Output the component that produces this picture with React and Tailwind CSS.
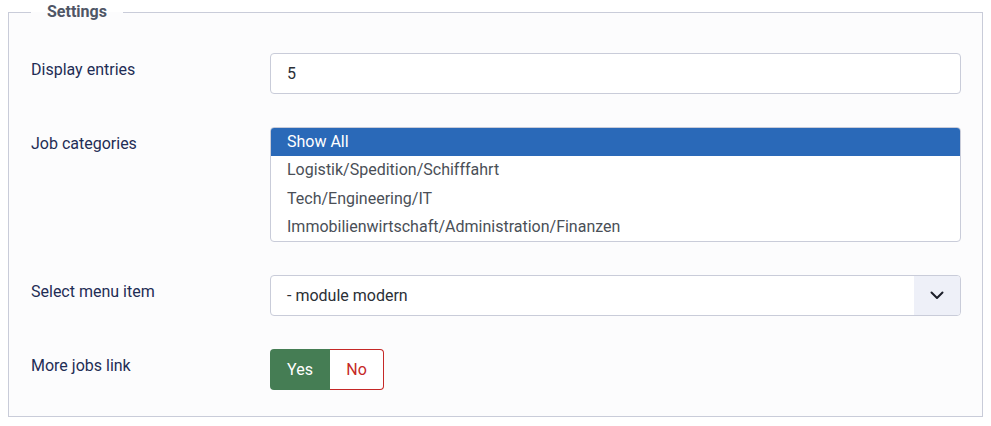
function Label({ children }) {
  return <div className="pt-[5px] text-base leading-6 text-[#1f2d55]">{children}</div>;
}

const categories = [
  "Show All",
  "Logistik/Spedition/Schifffahrt",
  "Tech/Engineering/IT",
  "Immobilienwirtschaft/Administration/Finanzen",
];

export default function App() {
  return (
    <div className="min-h-[426px] bg-white px-2 pb-[9px] font-['Roboto',sans-serif]">
      <fieldset className="border border-[#c9ccd9] bg-[#fcfcfd] pl-[22px] pr-[21px] pb-[26px]">
        <legend className="px-4 text-base font-bold leading-6 text-[#4f5666]">Settings</legend>
        <div className="grid grid-cols-[239px_1fr] gap-y-[33px] pt-[29px]">
          <Label>Display entries</Label>
          <div className="flex h-[41px] items-center rounded-[4px] border border-[#c9ccd9] bg-white px-4 text-base text-[#2b2f36]">
            5
          </div>

          <Label>Job categories</Label>
          <div className="overflow-hidden rounded-[4px] border border-[#c9ccd9] bg-white">
            {categories.map((c, i) => (
              <div
                key={c}
                className={
                  i === 0
                    ? "flex h-[28.25px] items-center bg-[#2a69b8] px-4 text-base text-white"
                    : "flex h-[28.25px] items-center px-4 text-base text-[#4a4f57]"
                }
              >
                {c}
              </div>
            ))}
          </div>

          <Label>Select menu item</Label>
          <div className="flex h-[41px] items-stretch overflow-hidden rounded-[4px] border border-[#c9ccd9] bg-white">
            <div className="flex flex-1 items-center px-4 text-base text-[#2b2f36]">- module modern</div>
            <div className="flex w-[46px] items-center justify-center bg-[#eef0f8]">
              <svg width="14" height="9" viewBox="0 0 14 9" fill="none">
                <path d="M1.5 1.5 L7 7 L12.5 1.5" stroke="#1c1f2a" strokeWidth="2" strokeLinecap="round" strokeLinejoin="round" />
              </svg>
            </div>
          </div>

          <Label>More jobs link</Label>
          <div className="flex h-[41px]">
            <div className="flex w-[60px] items-center justify-center rounded-l-[4px] bg-[#457d54] text-base text-white">
              Yes
            </div>
            <div className="flex w-[54px] items-center justify-center rounded-r-[4px] border border-l-0 border-[#c52827] bg-white text-base text-[#c52827]">
              No
            </div>
          </div>
        </div>
      </fieldset>
    </div>
  );
}
